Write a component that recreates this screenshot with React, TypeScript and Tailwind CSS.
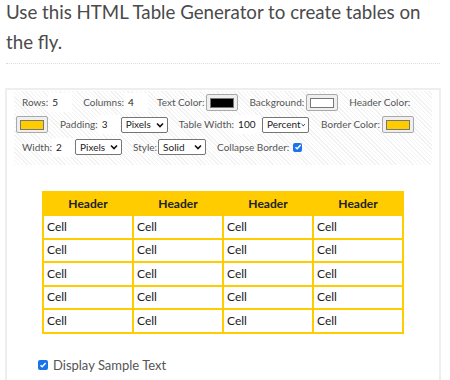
import React from 'react';

function Num({ v, w = 'w-[24px]' }: { v: string; w?: string }) {
  return <div className={`${w} h-[19px] bg-white flex items-center pl-[4px] text-[#222]`}>{v}</div>;
}

function Swatch({ color }: { color: string }) {
  return (
    <div className="w-[32px] h-[17px] border border-[#a9a9a9] bg-[#efefef] rounded-[2px] flex items-center justify-center">
      <div className="w-[24px] h-[10px] border border-[#777]" style={{ backgroundColor: color }} />
    </div>
  );
}

function Select({ label, w }: { label: string; w: string }) {
  return (
    <div className={`${w} h-[16px] border border-[#767676] rounded-[2px] bg-white flex items-center justify-between pl-[4px] pr-[3px] text-[#222]`}>
      <span>{label}</span>
      <svg width="8" height="6" viewBox="0 0 8 6">
        <path d="M1 1.5 L4 4.5 L7 1.5" fill="none" stroke="#111" strokeWidth="1.6" />
      </svg>
    </div>
  );
}

function Check({ size = 'w-[10px] h-[10px]' }: { size?: string }) {
  return (
    <div className={`${size} bg-[#1a73e8] rounded-[2px] flex items-center justify-center`}>
      <svg width="8" height="8" viewBox="0 0 8 8">
        <path d="M1.5 4.2 L3.2 5.8 L6.6 2" fill="none" stroke="#fff" strokeWidth="1.5" />
      </svg>
    </div>
  );
}

export default function App() {
  const rows = [0, 1, 2, 3, 4];
  const cols = [0, 1, 2, 3];
  return (
    <div className="w-[450px] h-[380px] overflow-hidden bg-white font-['Lato',sans-serif]">
      <div className="-mt-[3px] pl-[6px] w-[430px] text-[18.7px] leading-[30px] text-[#4a4a4a]">
        Use this HTML Table Generator to create tables on the fly.
      </div>
      <div className="mx-[6px] mt-[6px] border-t border-dotted border-[#ddd] w-[434px]" />
      <div className="ml-[5px] mt-[24px] w-[436px] h-[400px] border-2 border-[#eee] border-b-0 pt-[1px]">
        <div className="ml-[7px] mr-[7px] pt-[1px] pb-[7px] pl-[2px] text-[10px] text-[#555] bg-[repeating-linear-gradient(45deg,#f2f2f2_0px,#f2f2f2_1px,#ffffff_1px,#ffffff_3px)]">
          <div className="flex items-center h-[21px]">
            <span className="ml-[6px]">Rows:</span>
            <Num v="5" />
            <span className="ml-[11px]">Columns:</span>
            <Num v="4" />
            <span className="ml-[9px] mr-[2px]">Text Color:</span>
            <Swatch color="#000000" />
            <span className="ml-[11px] mr-[2px]">Background:</span>
            <Swatch color="#ffffff" />
            <span className="ml-[11px]">Header Color:</span>
          </div>
          <div className="flex items-center h-[23px]">
            <Swatch color="#ffcc00" />
            <span className="ml-[12px]">Padding:</span>
            <Num v="3" w="w-[22px]" />
            <div className="ml-[1px]"><Select label="Pixels" w="w-[47px]" /></div>
            <span className="ml-[11px]">Table Width:</span>
            <Num v="100" w="w-[27px]" />
            <div className="ml-[1px]"><Select label="Percent" w="w-[47px]" /></div>
            <span className="ml-[12px] mr-[2px]">Border Color:</span>
            <Swatch color="#ffcc00" />
          </div>
          <div className="flex items-center h-[22px]">
            <span className="ml-[6px]">Width:</span>
            <Num v="2" w="w-[22px]" />
            <div className="ml-[1px]"><Select label="Pixels" w="w-[47px]" /></div>
            <span className="ml-[11px]">Style:</span>
            <div className="ml-[1px]"><Select label="Solid" w="w-[48px]" /></div>
            <span className="ml-[11px] mr-[4px]">Collapse Border:</span>
            <Check size="w-[9px] h-[9px]" />
          </div>
        </div>
        <table className="mt-[26px] ml-[35px] w-[362px] border-collapse border-2 border-[#ffcc00] text-[12px] leading-[16px]">
          <thead>
            <tr className="bg-[#ffcc00]">
              {cols.map((c) => (
                <th key={c} className="h-[23px] border-2 border-[#ffcc00] font-bold text-[#222] px-[3px] py-0 w-[90px]">Header</th>
              ))}
            </tr>
          </thead>
          <tbody>
            {rows.map((r) => (
              <tr key={r}>
                {cols.map((c) => (
                  <td key={c} className="h-[23.5px] border-2 border-[#ffcc00] text-[#222] px-[3px] py-0 text-left">Cell</td>
                ))}
              </tr>
            ))}
          </tbody>
        </table>
        <div className="flex items-center mt-[22px] ml-[31px] text-[13px] text-[#555]">
          <Check />
          <span className="ml-[5px]">Display Sample Text</span>
        </div>
      </div>
    </div>
  );
}
